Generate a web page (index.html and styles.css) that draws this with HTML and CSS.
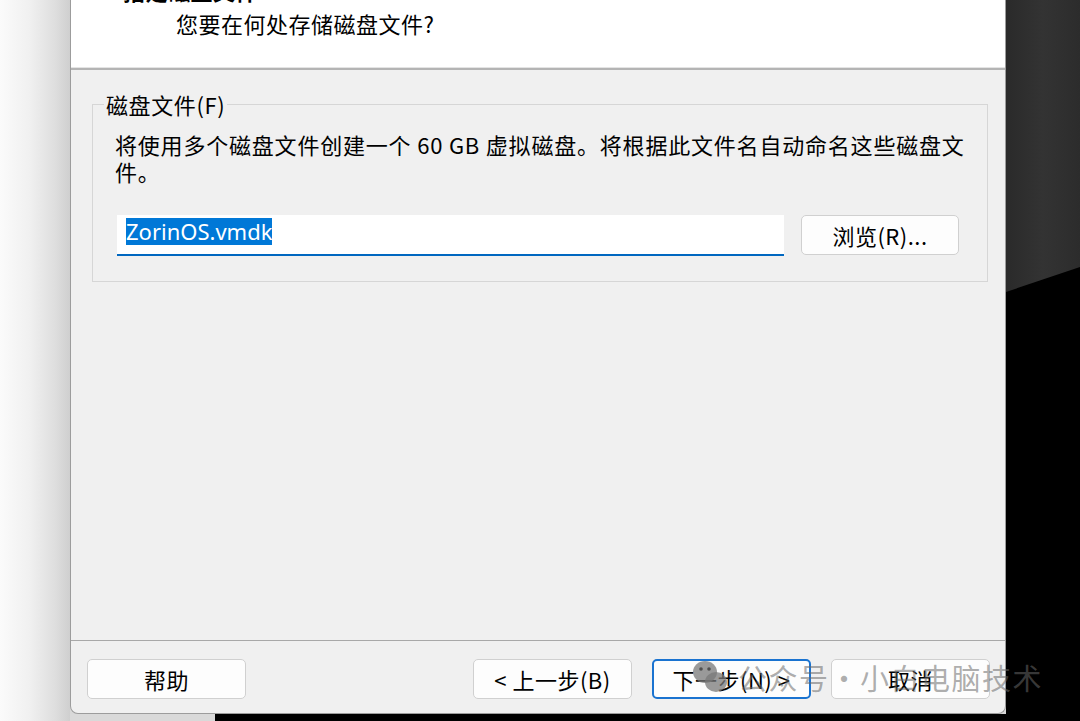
FILE: index.html
```html
<!DOCTYPE html>
<html lang="zh-CN">
<head>
<meta charset="utf-8">
<title>新建虚拟机向导</title>
<link rel="stylesheet" href="styles.css">
</head>
<body>
<div class="screen">
  <div class="shade"></div>
  <div class="dialog">
    <header class="head">
      <h1 class="title">指定磁盘文件</h1>
      <p class="subtitle">您要在何处存储磁盘文件?</p>
    </header>
    <main class="body">
      <fieldset class="group">
        <legend>磁盘文件(F)</legend>
        <p class="desc">将使用多个磁盘文件创建一个 60 GB 虚拟磁盘。将根据此文件名自动命名这些磁盘文件。</p>
        <div class="file-row">
          <div class="field"><span class="sel">ZorinOS.vmdk</span></div>
          <button class="btn browse">浏览(R)...</button>
        </div>
      </fieldset>
    </main>
    <footer class="foot">
      <button class="btn">帮助</button>
      <div class="nav">
        <button class="btn">&lt; 上一步(B)</button>
        <button class="btn primary">下一步(N) &gt;</button>
        <button class="btn">取消</button>
      </div>
    </footer>
  </div>
  <div class="desk">
    <svg width="74" height="721" viewBox="0 0 74 721" preserveAspectRatio="none">
      <defs>
        <linearGradient id="dk" x1="0" y1="0" x2="1" y2="0">
          <stop offset="0" stop-color="#2a2a2a"/>
          <stop offset="0.5" stop-color="#333333"/>
          <stop offset="1" stop-color="#2c2c2c"/>
        </linearGradient>
      </defs>
      <rect x="0" y="0" width="74" height="721" fill="url(#dk)"/>
      <polygon points="0,292 74,267 74,721 0,721" fill="#000"/>
    </svg>
  </div>
  <div class="below"></div>
  <div class="watermark">
    <svg class="wx" width="40" height="36" viewBox="0 0 40 36">
      <ellipse cx="14" cy="13" rx="12" ry="11" fill="rgba(120,120,120,0.75)"/>
      <ellipse cx="25" cy="23" rx="11" ry="10" fill="rgba(120,120,120,0.75)"/>
      <circle cx="10" cy="10" r="1.8" fill="rgba(60,60,60,0.8)"/>
      <circle cx="18" cy="10" r="1.8" fill="rgba(60,60,60,0.8)"/>
    </svg>
    <span class="wm-text">公众号<span class="wm-dot"> · </span>小白电脑技术</span>
  </div>
</div>
</body>
</html>
```

FILE: styles.css
```css
html, body {
  margin: 0;
  padding: 0;
  overflow: hidden;
}

body {
  font-family: "Noto Sans CJK SC", "Noto Sans", sans-serif;
  color: #000;
}

.screen {
  position: relative;
  width: 1080px;
  height: 721px;
  display: grid;
  grid-template-columns: 70px 936px 74px;
  grid-template-rows: 714px 7px;
  background: #d8d8d8;
  overflow: hidden;
}

.shade {
  grid-column: 1;
  grid-row: 1 / 3;
  background: linear-gradient(to right, #fbfbfb 0, #f0f0f0 30px, #dedede 55px, #cfcfcf 70px);
}

.dialog {
  grid-column: 2;
  grid-row: 1;
  display: flex;
  flex-direction: column;
  background: #f0f0f0;
  border: 1px solid #9c9c9c;
  border-top: 0;
  border-radius: 0 0 8px 8px;
  overflow: hidden;
}

.desk {
  grid-column: 3;
  grid-row: 1 / 3;
  background: #000;
}

.desk svg {
  display: block;
}

.below {
  grid-column: 2;
  grid-row: 2;
  background: linear-gradient(to right, #d9d9d9 0, #d9d9d9 145px, #000 145px);
}

/* header */
.head {
  height: 68px;
  flex: none;
  background: #fff;
  border-bottom: 2px solid #b4b4b4;
  box-shadow: inset 0 -1px 0 #e4e4e4;
  padding-left: 52px;
  overflow: hidden;
}

.title {
  margin: -23px 0 0;
  font-size: 22px;
  line-height: 26px;
  font-weight: 700;
  letter-spacing: 0.5px;
}

.subtitle {
  margin: 7px 0 0 53px;
  font-size: 22px;
  line-height: 26px;
  letter-spacing: 0.5px;
}

/* body */
.body {
  flex: 1;
  min-height: 0;
}

.group {
  margin: 22px 17px 0 21px;
  padding: 15px 20px 25px 22px;
  border: 1px solid #d6d6d6;
  min-width: 0;
}

.group legend {
  margin-left: -11px;
  padding: 0 2px;
  font-size: 22px;
  line-height: 24px;
  letter-spacing: 0.6px;
}

.desc {
  margin: 0;
  max-width: 856px;
  font-size: 22px;
  line-height: 27px;
  letter-spacing: 0.8px;
}

.file-row {
  display: flex;
  align-items: flex-start;
  gap: 17px;
  margin: 30px 0 0 2px;
}

.field {
  box-sizing: border-box;
  width: 667px;
  height: 41px;
  padding: 3px 0 0 9px;
  background: #fff;
  border-bottom: 2px solid #0067c0;
}

.sel {
  display: inline-block;
  height: 27px;
  line-height: 27px;
  background: #0078d7;
  color: #fff;
  font-family: "Noto Sans", sans-serif;
  font-size: 22px;
}

.btn {
  box-sizing: border-box;
  width: 159px;
  height: 40px;
  padding: 0;
  background: #fdfdfd;
  border: 1px solid #d0d0d0;
  border-radius: 5px;
  font-family: "Noto Sans CJK SC", "Noto Sans", sans-serif;
  font-size: 22px;
  line-height: 36px;
  letter-spacing: 0.5px;
  color: #000;
}

.browse {
  width: 158px;
}

.primary {
  border: 2px solid #1a73d0;
}

/* footer */
.foot {
  flex: none;
  height: 73px;
  box-sizing: border-box;
  border-top: 1px solid #a8a8a8;
  padding: 18px 15px 0 16px;
  display: flex;
  justify-content: space-between;
  align-items: flex-start;
}

.nav {
  display: flex;
  gap: 20px;
}

/* watermark overlay */
.watermark {
  position: absolute;
  left: 691px;
  top: 659px;
  display: flex;
  align-items: center;
  gap: 7px;
  pointer-events: none;
}

.wx {
  display: block;
}

.wm-text {
  font-size: 29px;
  line-height: 36px;
  letter-spacing: 1.5px;
  color: rgba(105, 105, 105, 0.55);
  white-space: nowrap;
}

.wm-dot {
  margin: 0 -8px;
}
```
